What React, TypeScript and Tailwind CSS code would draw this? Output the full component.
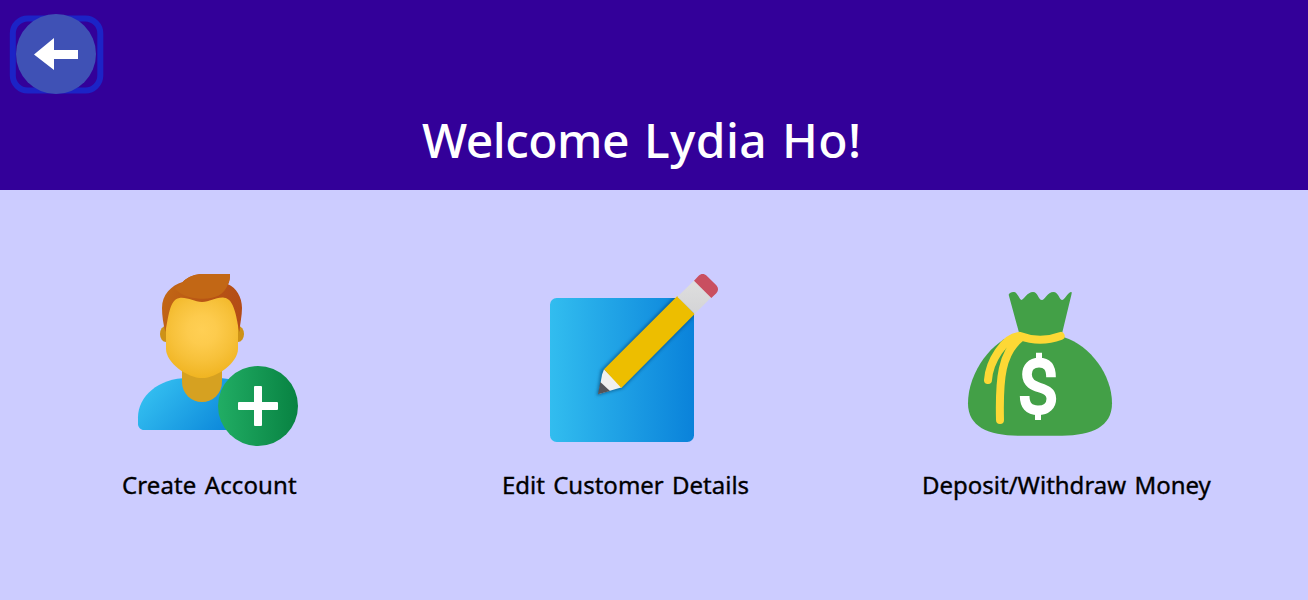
import type { ReactNode } from 'react';

function BackIcon() {
  return (
    <svg viewBox="0 0 96 84" className="h-[84px] w-24" aria-hidden="true">
      <rect x="4.8" y="6.5" width="87.5" height="72" rx="15" fill="none" stroke="#1c23c6" strokeWidth="6" />
      <circle cx="48" cy="42" r="40" fill="#3f51b5" />
      <path d="M26 42.5 46 26v12h24v9H46v11z" fill="#fff" />
    </svg>
  );
}

function AddUserIcon() {
  return (
    <svg viewBox="0 0 576 576" className="size-48" aria-hidden="true">
      <defs>
        <linearGradient id="shirt" x1="100" y1="370" x2="300" y2="550" gradientUnits="userSpaceOnUse">
          <stop stopColor="#33bef0" />
          <stop offset="1" stopColor="#0a85d9" />
        </linearGradient>
        <radialGradient id="face" cx="246" cy="210" r="145" gradientUnits="userSpaceOnUse">
          <stop stopColor="#ffcf54" />
          <stop offset="0.3" stopColor="#fdcb4d" />
          <stop offset="0.64" stopColor="#f7c13a" />
          <stop offset="1" stopColor="#f0b421" />
        </radialGradient>
        <linearGradient id="hair" x1="130" y1="90" x2="366" y2="160" gradientUnits="userSpaceOnUse">
          <stop stopColor="#c26715" />
          <stop offset="0.5" stopColor="#b85515" />
          <stop offset="1" stopColor="#b34b16" />
        </linearGradient>
        <linearGradient id="plus" x1="294" y1="0" x2="534" y2="0" gradientUnits="userSpaceOnUse">
          <stop stopColor="#21ad64" />
          <stop offset="1" stopColor="#088242" />
        </linearGradient>
      </defs>
      <path d="M54 492v-20c0-62 60-118 150-118h84c90 0 150 56 150 118v38H72c-10 0-18-8-18-18z" fill="url(#shirt)" />
      <path d="M186 318h120v48a60 60 0 0 1-120 0z" fill="#d6a121" />
      <ellipse cx="138" cy="222" rx="18" ry="24" fill="#cd9217" />
      <ellipse cx="354" cy="222" rx="18" ry="24" fill="#cd9217" />
      <path d="M138 190 150 120 186 90H306L342 120 354 190v76c0 42-64 88-108 88s-108-46-108-88z" fill="url(#face)" />
      <path d="M126 144c0-40 28-68 62-78 16-16 38-24 62-24h80c0 12-1 22-6 31 24 10 42 38 42 71 0 24-6 48-8 72-8-38-14-101-46-103-26-2-42 13-66 13s-42-15-68-12c-30 4-33 62-42 102-6-24-10-48-10-72z" fill="url(#hair)" />
      <path d="M188 66c16-16 38-24 62-24h80c0 12-1 22-6 31-12 32-38 43-72 43-32 0-64-6-88-30z" fill="#c26715" />
      <circle cx="414" cy="438" r="120" fill="url(#plus)" />
      <path d="M402 381c0-2 1-3 3-3h18c2 0 3 1 3 3v45h45c2 0 3 1 3 3v18c0 2-1 3-3 3h-45v45c0 2-1 3-3 3h-18c-2 0-3-1-3-3v-45h-45c-2 0-3-1-3-3v-18c0-2 1-3 3-3h45z" fill="#fff" />
    </svg>
  );
}

function EditIcon() {
  return (
    <svg viewBox="0 0 576 576" className="size-48" aria-hidden="true">
      <defs>
        <linearGradient id="sheet" x1="60" y1="0" x2="492" y2="0" gradientUnits="userSpaceOnUse">
          <stop stopColor="#32bdef" />
          <stop offset="1" stopColor="#0a82da" />
        </linearGradient>
        <linearGradient id="ferrule" x1="0" y1="64" x2="0" y2="160" gradientUnits="userSpaceOnUse">
          <stop stopColor="#dedede" />
          <stop offset="1" stopColor="#d4d4d6" />
        </linearGradient>
        <filter id="shade" x="-20%" y="-20%" width="140%" height="140%">
          <feGaussianBlur stdDeviation="5" />
        </filter>
        <clipPath id="sheetArea">
          <rect x="60" y="114" width="432" height="432" rx="20" />
        </clipPath>
      </defs>
      <rect x="60" y="114" width="432" height="432" rx="20" fill="url(#sheet)" />
      <g clipPath="url(#sheetArea)">
        <path d="M203 404 214 332 440 106l56 56-220 222z" fill="#003b68" stroke="#003b68" strokeWidth="5" opacity=".5" filter="url(#shade)" />
      </g>
      <path d="m222 328 54 54-70 20 10-58z" fill="#f0f0f0" />
      <path d="m211 366 29 27-36 10z" fill="#545459" />
      <path d="M222 328 442 108l52 54-220 222z" fill="#edbe00" />
      <path d="m442 110 52-50 50 52-50 50z" fill="url(#ferrule)" />
      <path d="M492 62 506 47c7-7 17-7 24 0l29 29c7 7 7 17 0 24l-15 14z" fill="#c94f60" />
    </svg>
  );
}

function MoneyBagIcon() {
  return (
    <svg viewBox="-18 -30 576 576" className="size-48" aria-hidden="true">
      <path d="M207 190C130 205 54 305 54 400c0 70 60 97 150 97h132c90 0 150-27 150-97 0-85-65-173-144-198z" fill="#43a047" />
      <path d="M176 74c4-8 17-11 24-3 8 10 10 17 14 19 8-2 18-24 35-24 15 0 16 24 27 24 8 0 17-24 34-24 16 0 17 23 26 24 8 0 18-24 28-24 2 0 1 5 0 9l-29 120q-63 22-126 0z" fill="#43a047" />
      <path d="M210 198q60 23 122 0M207 198c-44 4-89 76-93 132M213 202c-58 46-66 122-63 248" fill="none" stroke="#fdd835" strokeWidth="24" strokeLinecap="round" strokeLinejoin="round" />
      <g fill="none" stroke="#fff">
        <path d="M303 322c0-28-10-44-36-44-24 0-36 15-36 35 0 52 73 29 73 73 0 20-14 35-40 35-28 0-40-16-40-43" strokeWidth="29" />
        <path d="M267 248v24M264 424v26" strokeWidth="18" />
      </g>
    </svg>
  );
}

function Action({ icon, label, className, iconClass, labelClass }: { icon: ReactNode; label: string; className: string; iconClass: string; labelClass: string }) {
  return (
    <button type="button" className={`flex flex-col items-start ${className}`}>
      <span className={iconClass}>{icon}</span>
      <span className={`mt-[17px] pl-0.5 text-[24px] leading-8 font-normal whitespace-nowrap text-black [-webkit-text-stroke:0.35px_black] [word-spacing:2px] ${labelClass}`}>{label}</span>
    </button>
  );
}

export default function App() {
  return (
    <div className="flex h-[600px] w-full flex-col overflow-hidden bg-[#ccccff] font-['Noto_Sans',sans-serif]">
      <header className="flex h-[190px] shrink-0 flex-col bg-[#330099] pt-3 pl-2">
        <button type="button" aria-label="Back" className="h-[84px] w-24">
          <BackIcon />
        </button>
        <h1 className="mt-[11px] ml-[414px] text-[48px] leading-[66px] font-medium tracking-[0.4px] [word-spacing:2px] whitespace-nowrap text-white">
          <span className="tracking-[-0.5px]">Welcome</span> Lydia Ho!
        </h1>
      </header>
      <main className="flex pt-[70px] pl-[120px]">
        <Action icon={<AddUserIcon />} label="Create Account" className="w-[380px]" iconClass="" labelClass="tracking-[0.1px]" />
        <Action icon={<EditIcon />} label="Edit Customer Details" className="w-[420px]" iconClass="ml-[30px]" labelClass="tracking-normal" />
        <Action icon={<MoneyBagIcon />} label="Deposit/Withdraw Money" className="w-[380px]" iconClass="ml-6" labelClass="tracking-normal" />
      </main>
    </div>
  );
}
